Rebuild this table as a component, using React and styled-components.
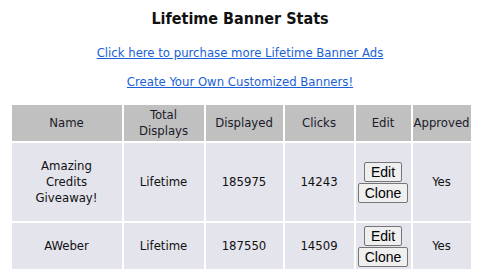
import React from "react"
import styled, { createGlobalStyle } from "styled-components"

const Global = createGlobalStyle`
  body {
    margin: 0;
    background: #fff;
    font-family: "DejaVu Sans Condensed", "DejaVu Sans", sans-serif;
    font-size: 13px;
    color: #111;
  }
`

const Page = styled.div`
  width: 480px;
  padding-top: 9px;
  display: flex;
  flex-direction: column;
  align-items: center;
`

const Title = styled.h2`
  margin: 0;
  font-size: 16px;
  font-weight: bold;
  line-height: 20px;
`

const LinkLine = styled.a`
  display: block;
  margin-top: ${props => props.gap}px;
  color: #1a5fd6;
  text-decoration: underline;
  line-height: 16px;
`

const Table = styled.table`
  margin-top: 13px;
  margin-left: 2px;
  width: 463px;
  table-layout: fixed;
  border-collapse: separate;
  border-spacing: 2px;
`

const Th = styled.th`
  background: #c0c0c0;
  font-weight: normal;
  height: 36px;
  padding: 0;
  line-height: 16px;
  text-align: center;
  color: #1a1a2a;
`

const Td = styled.td`
  background: #e4e4ec;
  height: ${props => props.h}px;
  padding: 0 4px;
  text-align: center;
  line-height: 16px;
`

const BtnStack = styled.div`
  display: flex;
  flex-direction: column;
  align-items: center;
  gap: 1px;
`

const Btn = styled.button`
  font-family: "Liberation Sans", Arial, sans-serif;
  font-size: 14px;
  line-height: 16px;
  padding: 1px 6px;
  background: #efefef;
  border: 1px solid #767676;
  border-radius: 2px;
  color: #000;
`

const rows = [
  { name: "Amazing Credits Giveaway!", type: "Lifetime", displayed: "185975", clicks: "14243", h: 78 },
  { name: "AWeber", type: "Lifetime", displayed: "187550", clicks: "14509", h: 46 },
]

export default function App() {
  return (
    <>
      <Global />
      <Page>
        <Title>Lifetime Banner Stats</Title>
        <LinkLine href="#" gap={16}>Click here to purchase more Lifetime Banner Ads</LinkLine>
        <LinkLine href="#" gap={13}>Create Your Own Customized Banners!</LinkLine>
        <Table>
          <colgroup>
            <col style={{ width: 110 }} />
            <col style={{ width: 80 }} />
            <col style={{ width: 77 }} />
            <col style={{ width: 69 }} />
            <col style={{ width: 55 }} />
            <col style={{ width: 58 }} />
          </colgroup>
          <thead>
            <tr>
              <Th>Name</Th>
              <Th>Total<br />Displays</Th>
              <Th>Displayed</Th>
              <Th>Clicks</Th>
              <Th>Edit</Th>
              <Th>Approved</Th>
            </tr>
          </thead>
          <tbody>
            {rows.map(r => (
              <tr key={r.name}>
                <Td h={r.h}>{r.name === "AWeber" ? r.name : <>Amazing<br />Credits<br />Giveaway!</>}</Td>
                <Td h={r.h}>{r.type}</Td>
                <Td h={r.h}>{r.displayed}</Td>
                <Td h={r.h}>{r.clicks}</Td>
                <Td h={r.h}>
                  <BtnStack>
                    <Btn>Edit</Btn>
                    <Btn>Clone</Btn>
                  </BtnStack>
                </Td>
                <Td h={r.h}>Yes</Td>
              </tr>
            ))}
          </tbody>
        </Table>
      </Page>
    </>
  )
}
